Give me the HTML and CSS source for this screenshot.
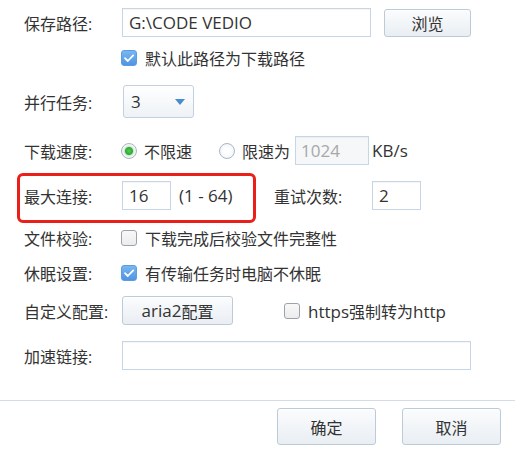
FILE: index.html
```html
<!DOCTYPE html>
<html lang="zh">
<head>
<meta charset="utf-8">
<link rel="stylesheet" href="styles.css">
</head>
<body>
<div class="dialog">
  <div class="form">
    <div class="row r1">
      <span class="label">保存路径:</span>
      <div class="input path"><span class="lat">G:\CODE VEDIO</span></div>
      <button class="btn browse">浏览</button>
    </div>
    <div class="row r2">
      <span class="label"></span>
      <span class="cb checked"><svg viewBox="0 0 16 16" width="16" height="16"><path d="M4 8.2l2.8 2.8L12.2 5.4" fill="none" stroke="#fff" stroke-width="1.8" stroke-linecap="round" stroke-linejoin="round"/></svg></span>
      <span class="opt">默认此路径为下载路径</span>
    </div>
    <div class="row r3">
      <span class="label">并行任务:</span>
      <div class="select"><span class="lat">3</span><span class="arrow"></span></div>
    </div>
    <div class="row r4">
      <span class="label">下载速度:</span>
      <span class="radio on"></span>
      <span class="opt ropt">不限速</span>
      <span class="radio second"></span>
      <span class="opt ropt">限速为</span>
      <div class="input small disabled"><span class="lat">1024</span></div>
      <span class="unit lat">KB/s</span>
    </div>
    <div class="row r5">
      <div class="mark">
        <span class="label">最大连接:</span>
        <div class="input num"><span class="lat">16</span></div>
        <span class="range lat">(1 - 64)</span>
      </div>
      <span class="label retry">重试次数:</span>
      <div class="input num"><span class="lat">2</span></div>
    </div>
    <div class="row r6">
      <span class="label">文件校验:</span>
      <span class="cb"></span>
      <span class="opt">下载完成后校验文件完整性</span>
    </div>
    <div class="row r7">
      <span class="label">休眠设置:</span>
      <span class="cb checked"><svg viewBox="0 0 16 16" width="16" height="16"><path d="M4 8.2l2.8 2.8L12.2 5.4" fill="none" stroke="#fff" stroke-width="1.8" stroke-linecap="round" stroke-linejoin="round"/></svg></span>
      <span class="opt">有传输任务时电脑不休眠</span>
    </div>
    <div class="row r8">
      <span class="label">自定义配置:</span>
      <button class="btn aria"><span class="lat">aria2</span>配置</button>
      <span class="cb https"></span>
      <span class="opt"><span class="lat">https</span>强制转为<span class="lat">http</span></span>
    </div>
    <div class="row r9">
      <span class="label">加速链接:</span>
      <div class="input link"></div>
    </div>
  </div>
  <div class="footer">
    <button class="btn foot">确定</button>
    <button class="btn foot">取消</button>
  </div>
</div>
</body>
</html>
```
FILE: styles.css
```css
* { box-sizing: border-box; }
html, body { margin: 0; padding: 0; background: #fff; }
body {
  font-family: "Open Sans", "Noto Sans CJK SC", sans-serif;
  font-size: 16px;
  color: #333;
  width: 515px;
  height: 450px;
  overflow: hidden;
}
.lat { font-size: 17px; }
.dialog { width: 515px; }
.form { padding: 8px 0 0 24px; }
.row { display: flex; align-items: center; }
.label { width: 98px; flex: none; white-space: nowrap; }
.r1 { height: 29px; }
.r2 { height: 22px; margin-top: 10px; }
.r3 { height: 33px; margin-top: 16px; }
.r4 { height: 29px; margin-top: 18px; }
.r5 { height: 29px; margin-top: 16px; }
.r6 { height: 22px; margin-top: 17px; }
.r7 { height: 22px; margin-top: 13px; }
.r8 { height: 29px; margin-top: 12px; }
.r9 { height: 29px; margin-top: 16px; }

.input {
  height: 29px;
  border: 1px solid #c6d6e6;
  background: #fff;
  box-shadow: inset 0 1px 1px rgba(0,0,0,0.04);
  padding: 0 6px;
  line-height: 27px;
  white-space: nowrap;
  display: flex;
  align-items: center;
}
.path { width: 249px; }
.small { width: 74px; margin-left: 5px; padding-left: 5px; }
.disabled { background: #f5f7f9; color: #a8a8a8; }
.num { width: 49px; padding-left: 6px; }
.link { width: 349px; }
.unit { margin-left: 3px; }

.btn {
  font-family: inherit;
  font-size: 16px;
  color: #333;
  border: 1px solid #bccbd9;
  border-radius: 3px;
  background: linear-gradient(#fbfcfd, #e9eef3);
  padding: 0;
  box-shadow: inset 0 1px 0 #fff;
  display: inline-flex;
  align-items: center;
  justify-content: center;
}
.browse { width: 87px; height: 28px; margin-left: 13px; }
.aria { width: 111px; height: 29px; }

.cb {
  width: 16px; height: 16px; flex: none;
  border: 1px solid #9aa3ad;
  border-radius: 3px;
  background: linear-gradient(#f8f8f8, #ececec);
  margin-left: -1px;
  display: inline-flex;
}
.cb.checked {
  border: 1px solid #5b9de0;
  background: linear-gradient(#79b6f2, #4f95e3);
}
.cb.https { margin-left: 51px; }
.cb svg { display: block; margin: -1px; }
.opt { margin-left: 8px; white-space: nowrap; }
.ropt { margin-left: 7px; }

.select {
  width: 71px; height: 33px;
  margin-left: 1px;
  border: 1px solid #c3d1de;
  border-radius: 3px;
  background: linear-gradient(#ffffff, #eef2f6);
  display: flex; align-items: center;
  padding-left: 7px;
  position: relative;
}
.arrow {
  position: absolute;
  left: 51px; top: 13px;
  width: 0; height: 0;
  border-left: 5px solid transparent;
  border-right: 5px solid transparent;
  border-top: 6px solid #4b8bd0;
}

.radio {
  width: 16px; height: 16px; flex: none;
  border-radius: 50%;
  border: 1px solid #a9b7c6;
  background: radial-gradient(circle, #ffffff 30%, #e9eef3 100%);
  margin-left: -1px;
}
.radio.on {
  background: radial-gradient(circle, #4fd14f 0, #2fa83a 3.5px, #cfe6cf 4.5px, #f4f8f4 6px, #e6ecef 8px);
}
.radio.second { margin-left: 27px; }

.mark { display: flex; align-items: center; position: relative; width: 226px; flex: none; }
.mark::before {
  content: "";
  position: absolute;
  left: -7px; top: -8px;
  width: 233px; height: 44px;
  border: 3px solid #ea1f1a;
  border-radius: 6px;
}
.range { margin-left: 8px; white-space: nowrap; }
.retry { margin-left: 24px; width: 98px; }

.footer {
  margin-top: 30px;
  border-top: 1px solid #d4dde6;
  display: flex;
  justify-content: flex-end;
  gap: 26px;
  padding: 7px 14px 0 0;
}
.foot { width: 99px; height: 37px; }
```
